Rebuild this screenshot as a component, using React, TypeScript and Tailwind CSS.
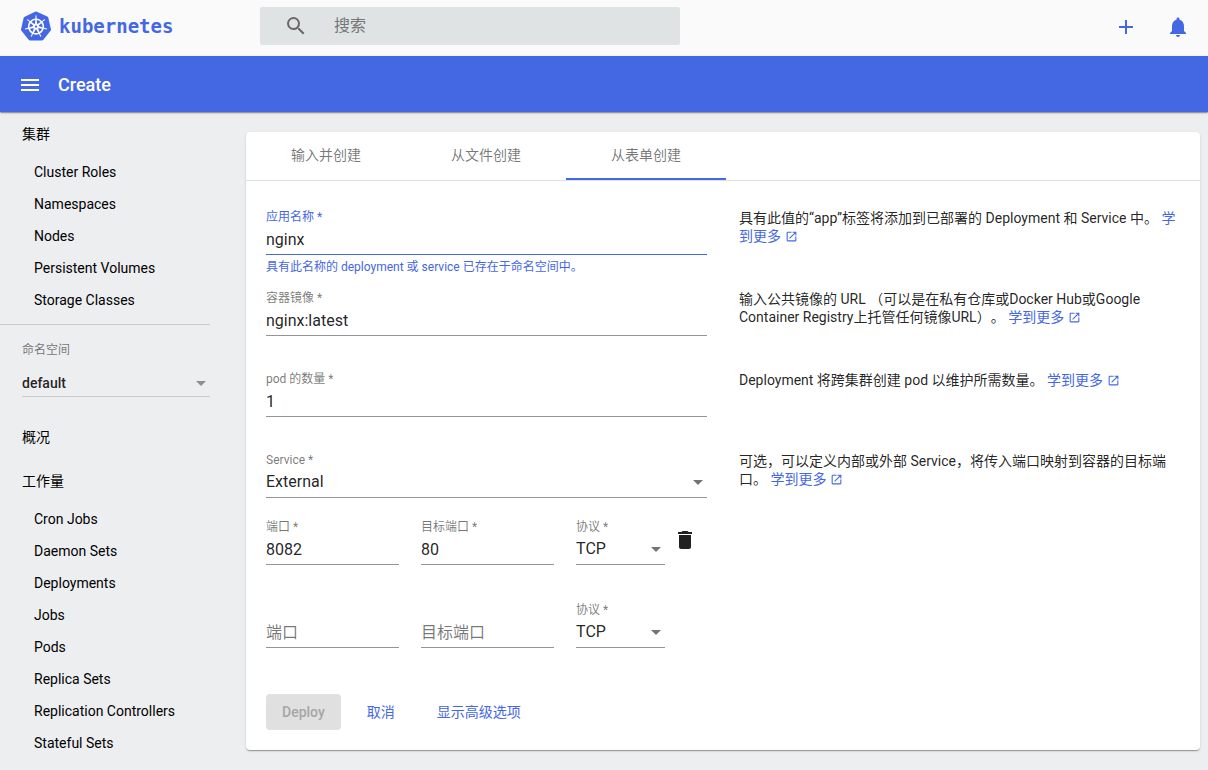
import { useId, type ReactNode } from "react"
import clsx from "clsx"
import { MdAdd, MdDelete, MdMenu, MdNotifications, MdOpenInNew, MdSearch } from "react-icons/md"
import { SiKubernetes } from "react-icons/si"

const CLUSTER = ["Cluster Roles", "Namespaces", "Nodes", "Persistent Volumes", "Storage Classes"]

const WORKLOADS = [
  "Cron Jobs",
  "Daemon Sets",
  "Deployments",
  "Jobs",
  "Pods",
  "Replica Sets",
  "Replication Controllers",
  "Stateful Sets",
]

const TABS = ["输入并创建", "从文件创建", "从表单创建"]

const ELEVATION =
  "shadow-[0_2px_1px_-1px_rgba(0,0,0,0.2),0_1px_1px_0_rgba(0,0,0,0.14),0_1px_3px_0_rgba(0,0,0,0.12)]"

function Arrow({ className }: { className?: string }) {
  return (
    <svg
      viewBox="0 0 10 5"
      className={clsx("pointer-events-none absolute top-3 right-1 h-[5px] w-[10px]", className)}
      aria-hidden="true"
    >
      <path d="M0 0h10L5 5z" fill="currentColor" />
    </svg>
  )
}

function Header() {
  return (
    <header className="flex h-14 items-center bg-[#fafafa] pr-[18px] pb-1 text-[#4467e3]">
      <a href="#" className="flex w-[260px] shrink-0 items-center gap-2 pl-[21px]">
        <SiKubernetes className="size-[30px]" aria-hidden="true" />
        <span className="font-['DejaVu_Sans_Mono',monospace] text-[19px] leading-6 font-bold">
          kubernetes
        </span>
      </a>
      <form className="flex h-[38px] w-full max-w-[420px] items-center gap-[26px] rounded-xs bg-[#dfe3e4] pl-6">
        <MdSearch className="size-6 shrink-0 text-[#686a6a]" aria-hidden="true" />
        <input
          type="search"
          aria-label="搜索"
          placeholder="搜索"
          className="min-w-0 flex-1 bg-transparent text-base outline-none placeholder:text-[#757575]"
        />
      </form>
      <div className="ml-auto flex gap-7 pt-[2px]">
        <button type="button" aria-label="Create">
          <MdAdd className="size-6" />
        </button>
        <button type="button" aria-label="Notifications">
          <MdNotifications className="size-6" />
        </button>
      </div>
    </header>
  )
}

function ActionBar() {
  return (
    <div
      className={clsx(
        "relative flex h-14 items-center gap-4 bg-[#4467e3] px-[18px] pt-[2px] text-white",
        ELEVATION,
      )}
    >
      <button type="button" aria-label="Menu">
        <MdMenu className="size-6" />
      </button>
      <h1 className="text-lg leading-6 font-medium">Create</h1>
    </div>
  )
}

function NavHeading({ children }: { children: ReactNode }) {
  return (
    <a href="#" className="flex h-11 items-center pl-[22px]">
      {children}
    </a>
  )
}

function NavItems({ items }: { items: string[] }) {
  return (
    <ul>
      {items.map((item) => (
        <li key={item}>
          <a href="#" className="flex h-8 items-center pl-[34px]">
            {item}
          </a>
        </li>
      ))}
    </ul>
  )
}

function Sidebar() {
  return (
    <nav className="w-[210px] shrink-0 text-sm text-black">
      <NavHeading>集群</NavHeading>
      <NavItems items={CLUSTER} />
      <div className="mt-2 mb-[18px] border-t border-black/15 pt-[17px] pl-[22px]">
        <label htmlFor="namespace" className="block text-xs leading-4 text-black/54">
          命名空间
        </label>
        <div className="relative mt-[11px]">
          <select
            id="namespace"
            className="block h-7 w-full appearance-none border-b border-black/15 font-medium text-black/87 outline-none"
          >
            <option>default</option>
          </select>
          <Arrow className="text-black/40" />
        </div>
      </div>
      <NavHeading>概况</NavHeading>
      <NavHeading>工作量</NavHeading>
      <NavItems items={WORKLOADS} />
    </nav>
  )
}

const CONTROL = "block h-[30px] w-full border-b bg-transparent text-base text-black/87 outline-none"

interface FieldProps {
  label: string
  value?: string
  active?: boolean
  select?: boolean
}

function Field({ label, value, active, select }: FieldProps) {
  const id = useId()
  const border = active ? "border-[#4467e3]" : "border-black/42"
  const empty = !select && !value

  return (
    <div>
      <label
        htmlFor={id}
        className={clsx(
          "block h-4 text-xs leading-4",
          active ? "text-[#4467e3]" : "text-black/54",
        )}
      >
        {!empty && `${label} *`}
      </label>
      {select ? (
        <div className="relative">
          <select id={id} className={clsx(CONTROL, border, "appearance-none pb-px")}>
            <option>{value}</option>
          </select>
          <Arrow className="text-black/54" />
        </div>
      ) : (
        <input
          id={id}
          type="text"
          defaultValue={value}
          placeholder={label}
          aria-label={empty ? label : undefined}
          className={clsx(CONTROL, border, "pb-px placeholder:text-black/54")}
        />
      )}
    </div>
  )
}

function Row({ children, help }: { children: ReactNode; help: string }) {
  return (
    <div className="grid grid-cols-2 gap-8">
      <div>{children}</div>
      <p className="text-sm leading-[18px] [text-spacing-trim:space-all]">
        {help}{" "}
        <a href="#" className="text-[#4467e3]">
          学到更多
          <MdOpenInNew className="mb-[2px] ml-1 inline size-[13px]" aria-hidden="true" />
        </a>
      </p>
    </div>
  )
}

function PortMapping({ port, target, removable }: { port?: string; target?: string; removable?: boolean }) {
  return (
    <div className="flex w-[calc(50%-14px)] items-start">
      <div className="mr-[5%] w-[30%]">
        <Field label="端口" value={port} />
      </div>
      <div className="mr-[5%] w-[30%]">
        <Field label="目标端口" value={target} />
      </div>
      <div className="mr-2 w-1/5">
        <Field label="协议" value="TCP" select />
      </div>
      {removable && (
        <button type="button" aria-label="Delete" className="pt-[9px]">
          <MdDelete className="size-6 text-black/87" />
        </button>
      )}
    </div>
  )
}

function CreateForm() {
  return (
    <form className="px-5 pt-7 pb-5">
      <div className="grid auto-rows-[81px]">
        <Row help="具有此值的“app”标签将添加到已部署的 Deployment 和 Service 中。">
          <Field label="应用名称" value="nginx" active />
          <p className="pt-1 text-xs leading-4 text-[#4467e3]">
            具有此名称的 deployment 或 service 已存在于命名空间中。
          </p>
        </Row>
        <Row help="输入公共镜像的 URL （可以是在私有仓库或Docker Hub或Google Container Registry上托管任何镜像URL）。">
          <Field label="容器镜像" value="nginx:latest" />
        </Row>
        <Row help="Deployment 将跨集群创建 pod 以维护所需数量。">
          <Field label="pod 的数量" value="1" />
        </Row>
      </div>
      <Row help="可选，可以定义内部或外部 Service，将传入端口映射到容器的目标端口。">
        <Field label="Service" value="External" select />
      </Row>
      <div className="flex flex-col gap-[37px] pt-[21px]">
        <PortMapping port="8082" target="80" removable />
        <PortMapping />
      </div>
      <div className="mt-[46px] flex h-9 gap-[10px] text-sm font-medium text-[#4467e3]">
        <button type="submit" disabled className="rounded-sm bg-[#e0e0e0] px-4 text-[#a6a6a6]">
          Deploy
        </button>
        <button type="button" className="px-4 font-normal">
          取消
        </button>
        <button type="button" className="px-4 font-normal">
          显示高级选项
        </button>
      </div>
    </form>
  )
}

export default function App() {
  return (
    <div
      lang="zh-CN"
      className="min-h-screen bg-[#edeef0] font-[Roboto,'Noto_Sans_CJK_SC',sans-serif] text-black/87"
    >
      <Header />
      <ActionBar />
      <div className="flex">
        <Sidebar />
        <main className="min-w-0 flex-1 pt-5 pr-2 pb-5 pl-9">
          <section className={clsx("rounded-sm bg-white", ELEVATION)}>
            <div role="tablist" className="flex border-b border-black/12 text-sm text-black/54">
              {TABS.map((tab, i) => (
                <button
                  key={tab}
                  type="button"
                  role="tab"
                  aria-selected={i === 2}
                  className={clsx(
                    "h-12 w-40 border-b-2",
                    i === 2 ? "border-[#4467e3]" : "border-transparent",
                  )}
                >
                  {tab}
                </button>
              ))}
            </div>
            <CreateForm />
          </section>
        </main>
      </div>
    </div>
  )
}
